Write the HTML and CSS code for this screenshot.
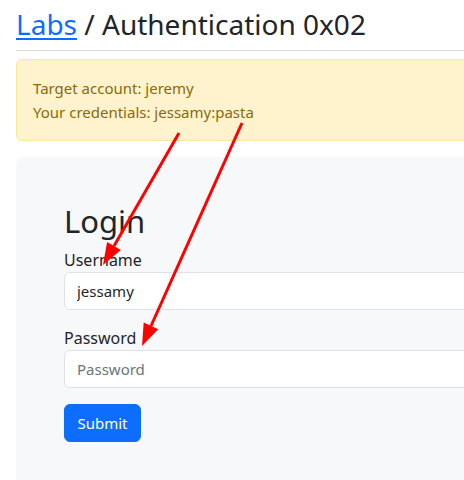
FILE: index.html
```html
<!DOCTYPE html>
<html lang="en">
<head>
<meta charset="utf-8">
<title>Labs / Authentication 0x02</title>
<link rel="stylesheet" href="styles.css">
</head>
<body>
<div class="page">
  <h1 class="title"><a href="#">Labs</a> / Authentication 0x02</h1>
  <hr class="rule">
  <div class="alert">Target account: jeremy<br>Your credentials: jessamy:pasta</div>
  <div class="card">
    <h2 class="card-title">Login</h2>
    <form class="form">
      <div class="field">
        <label class="label" for="u">Username</label>
        <input class="input" id="u" type="text" value="jessamy">
      </div>
      <div class="field">
        <label class="label" for="p">Password</label>
        <input class="input" id="p" type="password" placeholder="Password">
      </div>
      <button class="btn" type="button">Submit</button>
    </form>
  </div>
  <svg class="arrows" width="464" height="480" viewBox="0 0 464 480">
    <line x1="179" y1="133" x2="114" y2="246" stroke="#ff0000" stroke-width="3"/>
    <polygon points="103,265 120.9,249.9 107.1,241.9" fill="#ff0000"/>
    <line x1="242" y1="123" x2="151" y2="326" stroke="#ff0000" stroke-width="3"/>
    <polygon points="142,346 158.3,329.2 143.7,322.6" fill="#ff0000"/>
  </svg>
</div>
</body>
</html>
```
FILE: styles.css
```css
html, body {
  margin: 0;
  padding: 0;
  overflow: hidden;
  background: #fff;
}
body {
  font-family: "Noto Sans", "Open Sans", sans-serif;
  font-size: 16px;
  line-height: 1.5;
  color: #212529;
}
.page {
  position: relative;
  width: 900px;
  padding: 0 16px;
}
.title {
  margin: 0;
  padding-top: 6px;
  font-size: 28px;
  font-weight: 400;
  line-height: 36px;
}
.title a {
  color: #0d6efd;
  text-decoration: underline;
  text-underline-offset: 3px;
  text-decoration-thickness: 2px;
}
.rule {
  margin: 8px 0 8px;
  border: 0;
  border-top: 1px solid #dcdde3;
}
.alert {
  background: #fff3cd;
  border: 1px solid #ffe69c;
  border-radius: 6px;
  padding: 16px;
  color: #8a6a08;
  font-size: 15px;
  line-height: 24px;
}
.card {
  margin-top: 16px;
  background: #f7f8fa;
  border-radius: 8px;
  padding: 45px 48px 48px;
  height: 300px;
}
.card-title {
  margin: 0 0 8px;
  font-size: 31px;
  font-weight: 400;
  line-height: 38px;
}
.form {
  display: flex;
  flex-direction: column;
  gap: 16px;
}
.field {
  display: flex;
  flex-direction: column;
}
.label {
  line-height: 24px;
}
.input {
  box-sizing: border-box;
  height: 38px;
  width: 100%;
  padding: 6px 12px;
  font: inherit;
  font-size: 15px;
  color: #212529;
  background: #fff;
  border: 1px solid #dee2e6;
  border-radius: 6px;
}
.input::placeholder {
  color: #6c757d;
}
.btn {
  align-self: flex-start;
  height: 38px;
  width: 77px;
  padding: 0 12px;
  font: inherit;
  font-size: 15px;
  color: #fff;
  background: #0d6efd;
  border: 1px solid #0d6efd;
  border-radius: 6px;
}
.arrows {
  position: absolute;
  left: 0;
  top: 0;
  pointer-events: none;
}
```
